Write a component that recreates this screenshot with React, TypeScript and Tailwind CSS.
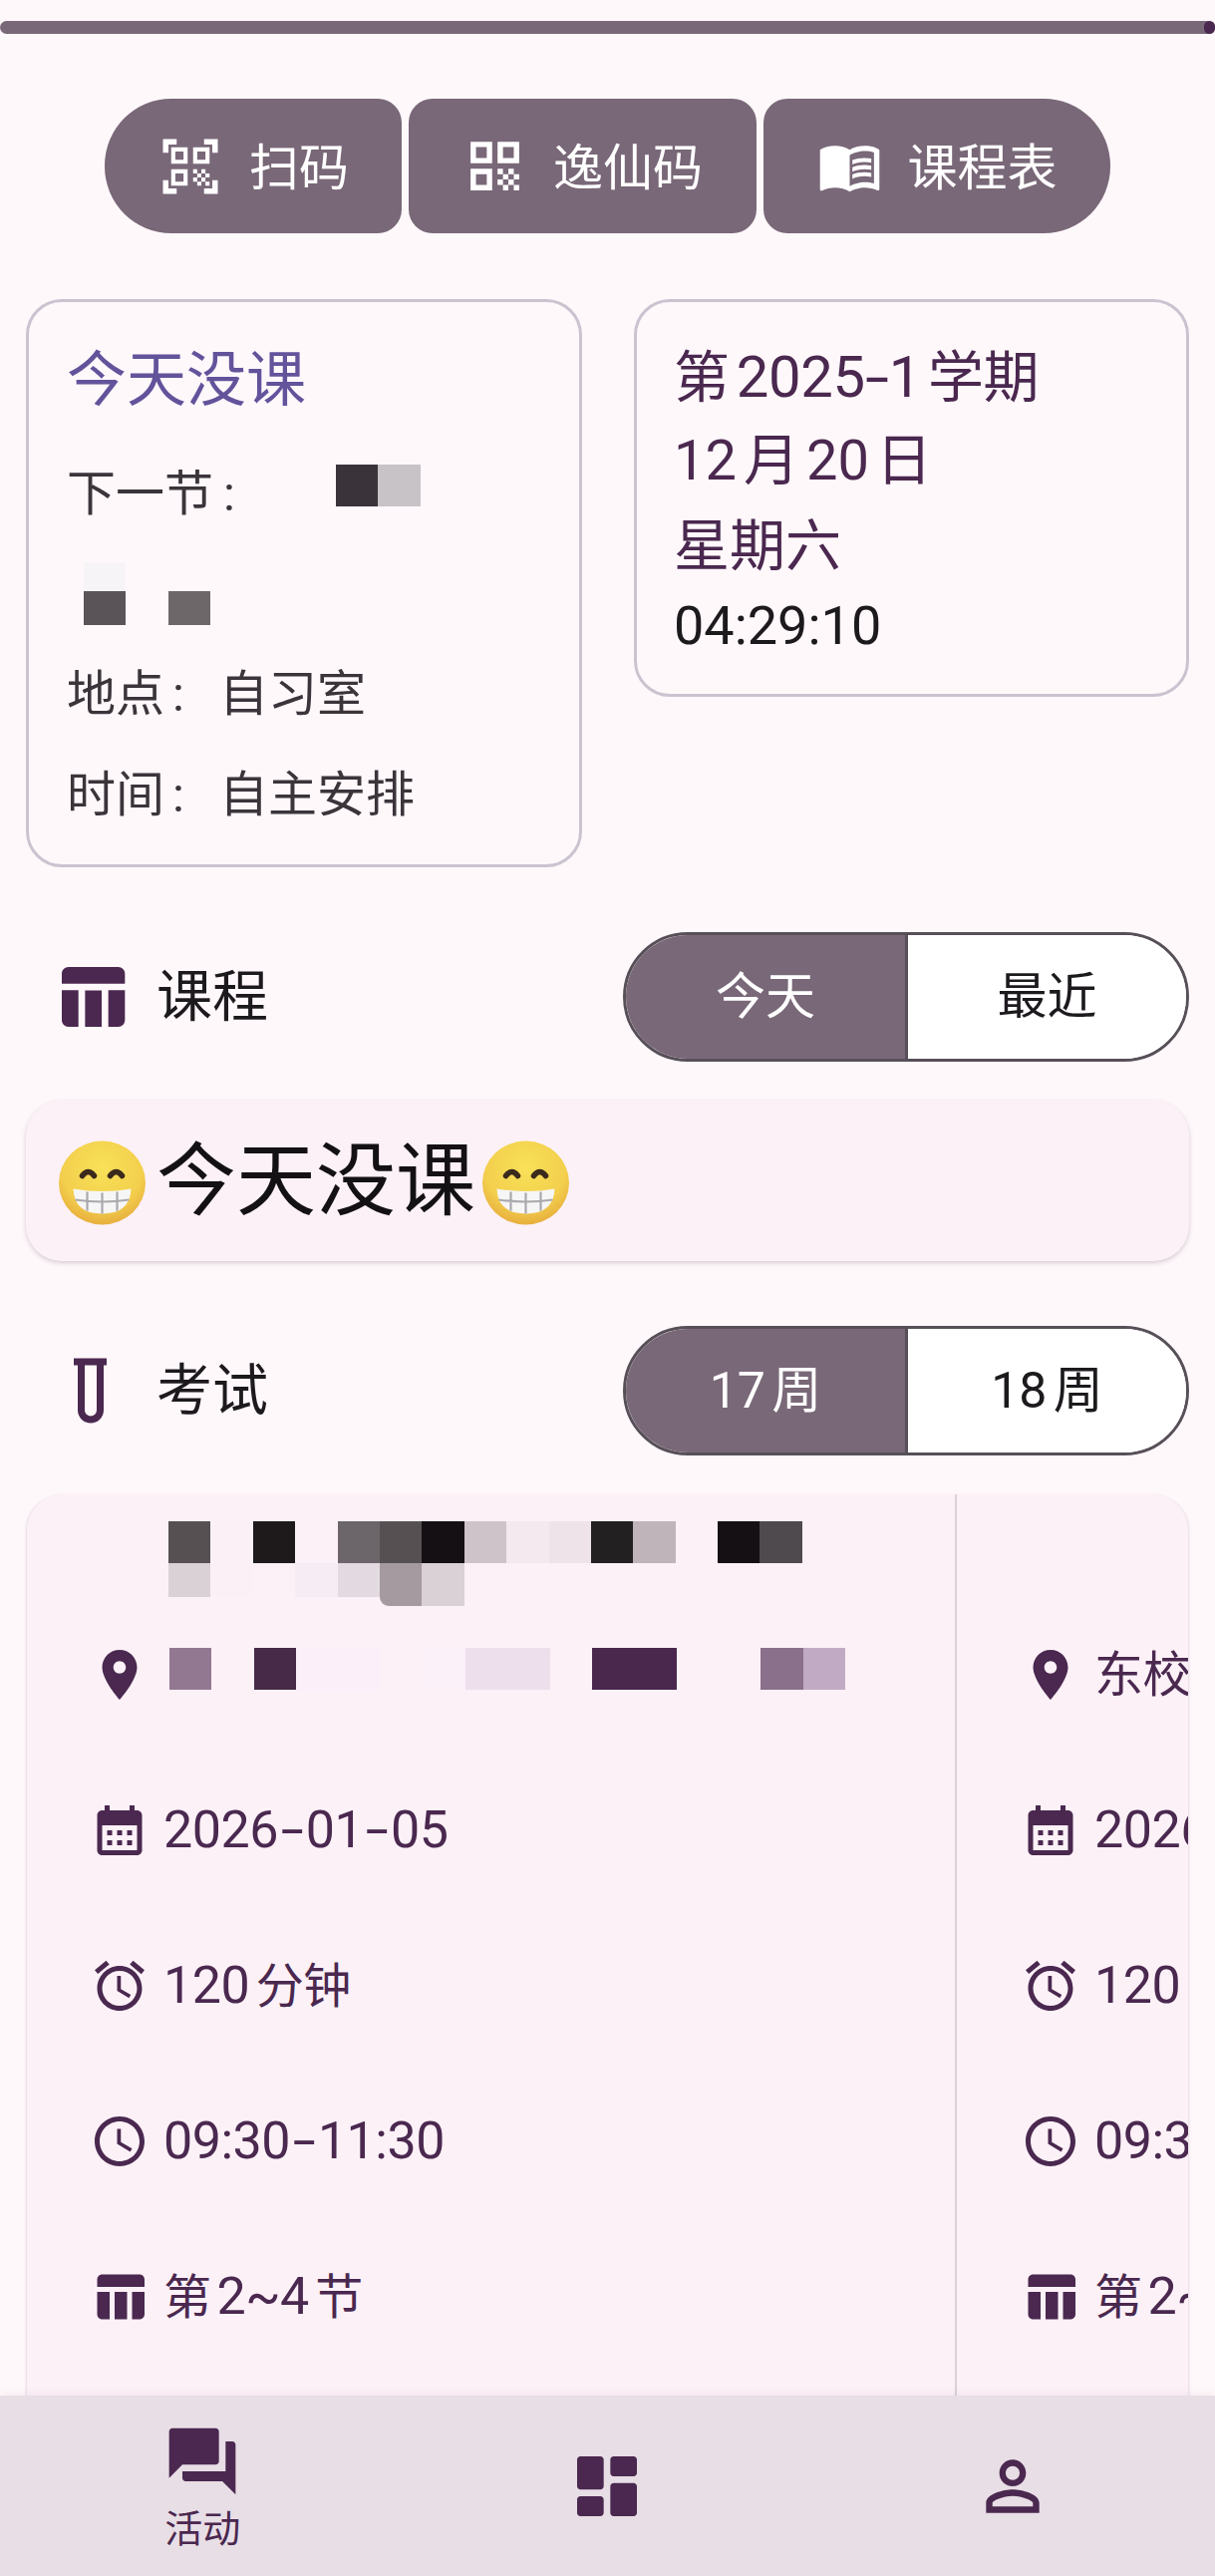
const qrScan =
  "M9.5 6.5v3h-3v-3h3M11 5H5v6h6V5zm-1.5 9.5v3h-3v-3h3M11 13H5v6h6v-6zm6.5-6.5v3h-3v-3h3M19 5h-6v6h6V5zm-6 8h1.5v1.5H13V13zm1.5 1.5H16V16h-1.5v-1.5zM16 13h1.5v1.5H16V13zm-3 3h1.5v1.5H13V16zm1.5 1.5H16V19h-1.5v-1.5zM16 16h1.5v1.5H16V16zm1.5-1.5H19V16h-1.5v-1.5zm0 3H19V19h-1.5v-1.5zM22 7h-2V4h-3V2h5v5zm0 15v-5h-2v3h-3v2h5zM2 22h5v-2H4v-3H2v5zM2 2v5h2V4h3V2H2z";
const qrCode =
  "M3 11h8V3H3v8zm2-6h4v4H5V5zM3 21h8v-8H3v8zm2-6h4v4H5v-4zm8-12v8h8V3h-8zm6 6h-4V5h4v4zm0 10h2v2h-2zm-6-6h2v2h-2zm2 2h2v2h-2zm-2 2h2v2h-2zm2 2h2v2h-2zm2-2h2v2h-2zm0-4h2v2h-2zm2 2h2v2h-2z";
const menuBook =
  "M21 5c-1.11-.35-2.33-.5-3.5-.5-1.95 0-4.05.4-5.5 1.5-1.45-1.1-3.55-1.5-5.5-1.5S2.45 4.9 1 6v14.65c0 .25.25.5.5.5.1 0 .15-.05.25-.05C3.1 20.45 5.05 20 6.5 20c1.95 0 4.05.4 5.5 1.5 1.35-.85 3.8-1.5 5.5-1.5 1.65 0 3.35.3 4.75 1.05.1.05.15.05.25.05.25 0 .5-.25.5-.5V6c-.6-.45-1.25-.75-2-1zm0 13.5c-1.1-.35-2.3-.5-3.5-.5-1.7 0-4.15.65-5.5 1.5V8c1.35-.85 3.8-1.5 5.5-1.5 1.2 0 2.4.15 3.5.5v11.5zM17.5 10.5c.88 0 1.73.09 2.5.26V9.24c-.79-.15-1.64-.24-2.5-.24-1.7 0-3.24.29-4.5.83v1.66c1.13-.64 2.7-.99 4.5-.99zM13 12.49v1.66c1.13-.64 2.7-.99 4.5-.99.88 0 1.73.09 2.5.26V11.9c-.79-.15-1.64-.24-2.5-.24-1.7 0-3.24.3-4.5.83zm4.5 1.84c-1.7 0-3.24.29-4.5.83v1.66c1.13-.64 2.7-.99 4.5-.99.88 0 1.73.09 2.5.26v-1.52c-.79-.16-1.64-.24-2.5-.24z";
const tableChart =
  "M10 10.02h5V21h-5zM17 21h3c1.1 0 2-.9 2-2v-9h-5v11zm3-18H5c-1.1 0-2 .9-2 2v3h19V5c0-1.1-.9-2-2-2zM3 19c0 1.1.9 2 2 2h3V10H3v9z";
const pin =
  "M12 2C8.13 2 5 5.13 5 9c0 5.25 7 13 7 13s7-7.75 7-13c0-3.87-3.13-7-7-7zm0 9.5c-1.38 0-2.5-1.12-2.5-2.5s1.12-2.5 2.5-2.5 2.5 1.12 2.5 2.5-1.12 2.5-2.5 2.5z";
const calendar =
  "M19 4h-1V2h-2v2H8V2H6v2H5c-1.11 0-1.99.9-1.99 2L3 20c0 1.1.89 2 2 2h14c1.1 0 2-.9 2-2V6c0-1.1-.9-2-2-2zm0 16H5V10h14v10zM9 14H7v-2h2v2zm4 0h-2v-2h2v2zm4 0h-2v-2h2v2zm-8 4H7v-2h2v2zm4 0h-2v-2h2v2zm4 0h-2v-2h2v2z";
const alarm =
  "M22 5.72l-4.6-3.86-1.29 1.53 4.6 3.86L22 5.72zM7.88 3.39L6.6 1.86 2 5.71l1.29 1.53 4.59-3.85zM12.5 8H11v6l4.75 2.85.75-1.23-4-2.37V8zM12 4c-4.97 0-9 4.03-9 9s4.03 9 9 9 9-4.03 9-9-4.03-9-9-9zm0 16c-3.87 0-7-3.13-7-7s3.13-7 7-7 7 3.13 7 7-3.13 7-7 7z";
const clock =
  "M11.99 2C6.47 2 2 6.48 2 12s4.47 10 9.99 10C17.52 22 22 17.52 22 12S17.52 2 11.99 2zM12 20c-4.42 0-8-3.58-8-8s3.58-8 8-8 8 3.58 8 8-3.58 8-8 8zm.5-13H11v6l5.25 3.15.75-1.23-4.5-2.67z";
const forum =
  "M21 6h-2v9H6v2c0 .55.45 1 1 1h11l4 4V7c0-.55-.45-1-1-1zm-4 6V3c0-.55-.45-1-1-1H3c-.55 0-1 .45-1 1v14l4-4h10c.55 0 1-.45 1-1z";
const dashboard =
  "M4 13h6c.55 0 1-.45 1-1V4c0-.55-.45-1-1-1H4c-.55 0-1 .45-1 1v8c0 .55.45 1 1 1zm0 8h6c.55 0 1-.45 1-1v-4c0-.55-.45-1-1-1H4c-.55 0-1 .45-1 1v4c0 .55.45 1 1 1zm10 0h6c.55 0 1-.45 1-1v-8c0-.55-.45-1-1-1h-6c-.55 0-1 .45-1 1v8c0 .55.45 1 1 1zM13 4v4c0 .55.45 1 1 1h6c.55 0 1-.45 1-1V4c0-.55-.45-1-1-1h-6c-.55 0-1 .45-1 1z";
const person =
  "M12 5.9c1.16 0 2.1.94 2.1 2.1s-.94 2.1-2.1 2.1S9.9 9.16 9.9 8s.94-2.1 2.1-2.1m0 9c2.97 0 6.1 1.46 6.1 2.1v1.1H5.9V17c0-.64 3.13-2.1 6.1-2.1M12 4C9.79 4 8 5.79 8 8s1.79 4 4 4 4-1.79 4-4-1.79-4-4-4zm0 9c-2.67 0-8 1.34-8 4v3h16v-3c0-2.66-5.33-4-8-4z";

const Icon = ({ d, className }: { d: string; className: string }) => (
  <svg viewBox="0 0 24 24" fill="currentColor" className={`shrink-0 ${className}`}>
    <path d={d} />
  </svg>
);

// blurred-out text in the screenshot, one class per mosaic cell
const Mosaic = ({ cells, className }: { cells: string[]; className: string }) => (
  <div className={`flex ${className}`}>
    {cells.map((c, i) => (
      <div key={i} className={`w-[42.4px] h-full ${c}`} />
    ))}
  </div>
);

const titleRow1 = [
  "bg-[#565053]", "bg-[#faf0f5]", "bg-[#1e1a1c]", "bg-transparent", "bg-[#6c666a]",
  "bg-[#565053]", "bg-[#141013]", "bg-[#cdc3c8]", "bg-[#f3e9ee]", "bg-[#ede3e9]",
  "bg-[#232022]", "bg-[#bfb4b9]", "bg-transparent", "bg-[#151014]", "bg-[#4f4a4d]",
];
const titleRow2 = [
  "bg-[#dad1d6]", "bg-[#faf0f5]", "bg-transparent", "bg-[#f5edf3]", "bg-[#e2dae0]",
  "bg-[#a49a9f]", "bg-[#d9d1d6]",
];
const titleRow3 = [
  "bg-transparent", "bg-transparent", "bg-transparent", "bg-transparent", "bg-transparent",
  "bg-[#a49a9f] rounded-bl-[12px]", "bg-[#d9d1d6]",
];
const placeRow = [
  "bg-[#937892]", "bg-transparent", "bg-[#462a48]", "bg-[#fbeff9]", "bg-[#fbeff9]",
  "bg-transparent", "bg-[#fbf1f8]", "bg-[#eddfec]", "bg-[#eddfec]", "bg-transparent",
  "bg-[#4a284d]", "bg-[#4a284d]", "bg-transparent", "bg-transparent", "bg-[#8a708a]",
  "bg-[#c1abc4]",
];

const Emoji = ({ id, className }: { id: string; className?: string }) => (
  <svg viewBox="-47.5 -47.5 95 95" className={`w-[95px] h-[95px] shrink-0 ${className ?? ""}`} role="img" aria-label="😁">
    <defs>
      <radialGradient id={id} cx="50%" cy="32%" r="72%">
        <stop offset="0%" stopColor="#f8e158" />
        <stop offset="65%" stopColor="#f3cf4d" />
        <stop offset="100%" stopColor="#e5a93a" />
      </radialGradient>
    </defs>
    <ellipse cx="0" cy="2" rx="43.5" ry="42" fill={`url(#${id})`} />
    <path d="M-20-5Q-14-13-8-5M8-5Q14-13 20-5" fill="none" stroke="#3b2a1c" strokeWidth="5.5" strokeLinecap="round" />
    <path d="M-29 8Q0 13 29 8Q28 33 0 33Q-28 33-29 8Z" fill="#f6f6f6" />
    <path d="M-27 19Q0 23 27 19M-15 11V30M0 12V33M15 11V30" fill="none" stroke="#a9a9ad" strokeWidth="2.2" />
  </svg>
);

const TubeIcon = () => (
  <svg viewBox="0 0 80 80" className="w-[80px] h-[80px] shrink-0 text-[#4a284f]">
    <path d="M22 7.5h33v7H22z" fill="currentColor" />
    <path d="M29.5 14V59.5a9.5 9.5 0 0 0 19 0V14" fill="none" stroke="currentColor" strokeWidth="7" />
  </svg>
);

const ActionButton = ({ d, label, className, iconClass }: { d: string; label: string; className: string; iconClass: string }) => (
  <div className={`h-[135px] bg-[#796878] text-white flex items-center justify-center gap-[26px] text-[50px] ${className}`}>
    <Icon d={d} className={iconClass} />
    <span className="translate-y-[3px]">{label}</span>
  </div>
);

const SectionHeader = ({ icon, title, left, right }: { icon: React.ReactNode; title: string; left: string; right: string }) => (
  <div className="flex items-center justify-between pl-[52px] pr-[26px]">
    <div className="flex items-center gap-[25px]">
      {icon}
      <span className="text-[56px] text-[#1d1a1e]">{title}</span>
    </div>
    <div className="flex w-[568px] h-[130px] rounded-full border-[3px] border-[#575058] overflow-hidden text-[50px]">
      <div className="w-[283px] bg-[#796878] text-white border-r-[3px] border-[#575058] flex items-center justify-center">{left}</div>
      <div className="flex-1 bg-white text-[#1d1a1e] flex items-center justify-center">{right}</div>
    </div>
  </div>
);

// the phone's hyphen is about twice as wide as Roboto's
const Dash = () => <span className="inline-block mx-[7px] scale-x-[1.6]">-</span>;
const Zh = ({ children }: { children: React.ReactNode }) => <span className="text-[48px]">{children}</span>;

const ExamRow = ({ d, children }: { d: string; children: React.ReactNode }) => (
  <div className="flex items-center gap-[14px] h-[60px] text-[52px] tracking-[-0.5px] text-[#4a284f] whitespace-nowrap">
    <Icon d={d} className="w-[60px] h-[60px]" />
    <div>{children}</div>
  </div>
);

const ExamDetails = ({ place }: { place: React.ReactNode }) => (
  <div className="flex flex-col gap-[96px]">
    <ExamRow d={pin}>{place}</ExamRow>
    <ExamRow d={calendar}>2026<Dash />01<Dash />05</ExamRow>
    <ExamRow d={alarm}>120<Zh>分钟</Zh></ExamRow>
    <ExamRow d={clock}>09:30<Dash />11:30</ExamRow>
    <ExamRow d={tableChart}><Zh>第</Zh>2~4<Zh>节</Zh></ExamRow>
  </div>
);

const Colon = () => <span className="ml-[8px] mr-[35px]">:</span>;

export default function App() {
  return (
    <div className="w-[1219px] h-[2584px] overflow-hidden flex flex-col bg-[#fff8fb] font-['Roboto','Noto_Sans_CJK_SC',sans-serif] [text-autospace:normal]">
      <div className="mt-[21px] h-[13px] shrink-0 rounded-full bg-[#796878] flex justify-end">
        <div className="w-[11px] h-full rounded-full bg-[#4a284f]" />
      </div>

      <div className="mt-[65px] flex justify-center gap-[7px] shrink-0">
        <ActionButton d={qrScan} label="扫码" iconClass="w-[66px] h-[66px]" className="w-[298px] rounded-l-[67px] rounded-r-[24px]" />
        <ActionButton d={qrCode} label="逸仙码" iconClass="w-[65px] h-[65px]" className="w-[349px] rounded-[24px]" />
        <ActionButton d={menuBook} label="课程表" iconClass="w-[65px] h-[65px]" className="w-[348px] rounded-r-[67px] rounded-l-[24px]" />
      </div>

      <div className="mt-[66px] px-[26px] flex items-start justify-between shrink-0">
        <div className="w-[558px] h-[570px] rounded-[36px] border-[3px] border-[#cac4d0] pl-[38px] pt-[45px] text-[49px] text-[#3b353b]">
          <div className="h-[68px] leading-[68px] text-[60px] text-[#62539b]">今天没课</div>
          <div className="mt-[35px] h-[84px] flex items-center">
            <span className="translate-y-[3px]">下一节</span>
            <span className="translate-y-[3px] ml-[10px] mr-[33px]">:</span>
            <Mosaic className="ml-[68px] h-[42px] -translate-y-[6px]" cells={["bg-[#3a343a]", "bg-[#c8c3c7]"]} />
          </div>
          <div className="mt-[29px] h-[63px] ml-[17px] flex flex-col">
            <Mosaic className="h-[29px]" cells={["bg-[#f7f4f7]"]} />
            <Mosaic className="h-[34px]" cells={["bg-[#5a5458]", "bg-transparent", "bg-[#6d6769]"]} />
          </div>
          <div className="mt-[28px] h-[84px] flex items-center">
            <span>地点</span>
            <Colon />
            <span>自习室</span>
          </div>
          <div className="mt-[17px] h-[84px] flex items-center">
            <span>时间</span>
            <Colon />
            <span>自主安排</span>
          </div>
        </div>

        <div className="w-[557px] h-[399px] rounded-[36px] border-[3px] border-[#cac4d0] pl-[37px] pt-[33px] text-[58px] text-[#4a284f]">
          <div className="h-[84px] leading-[84px] tracking-[-0.3px]">
            <span className="text-[56px]">第</span>2025
            <span className="inline-block mx-[4px] scale-x-[1.5]">-</span>1
            <span className="text-[56px]">学期</span>
          </div>
          <div className="h-[84px] leading-[84px] text-[56px]">12月20日</div>
          <div className="mt-[2px] h-[84px] leading-[84px] text-[56px]">星期六</div>
          <div className="-mt-[4px] h-[84px] leading-[84px] text-[54px] text-[#1d1a1e]">04:29:10</div>
        </div>
      </div>

      <div className="mt-[65px] shrink-0">
        <SectionHeader icon={<Icon d={tableChart} className="w-[80px] h-[80px] text-[#4a284f]" />} title="课程" left="今天" right="最近" />
      </div>

      <div className="mt-[39px] mx-[26px] h-[161px] shrink-0 rounded-[36px] bg-[#fcf1f7] shadow-[0_2px_5px_rgba(70,50,70,0.22)] flex items-center pl-[29px] text-[80px] text-[#141114]">
        <Emoji id="faceA" />
        <span className="ml-[7px]">今天没课</span>
        <Emoji id="faceB" className="ml-[3px]" />
      </div>

      <div className="mt-[65px] shrink-0">
        <SectionHeader icon={<TubeIcon />} title="考试" left="17周" right="18周" />
      </div>

      <div className="mt-[39px] mx-[26px] flex-1 min-h-0 rounded-t-[36px] bg-[#fcf1f7] border-x border-[#ece4ea] shadow-[0_1px_3px_rgba(70,50,70,0.12)] overflow-hidden flex">
        <div className="w-[933px] shrink-0 border-r-2 border-[#d8d0d6] pl-[63px]">
          <div className="pt-[27px] pl-[79px] h-[151px]">
            <Mosaic className="h-[42px]" cells={titleRow1} />
            <Mosaic className="h-[34px]" cells={titleRow2} />
            <Mosaic className="h-[9px]" cells={titleRow3} />
          </div>
          <ExamDetails place={<Mosaic className="h-[42px] ml-[6px] -translate-y-[6px]" cells={placeRow} />} />
        </div>
        <div className="flex-1 min-w-0 overflow-hidden pl-[64px] pt-[151px]">
          <ExamDetails place={<span className="text-[49px]">东校区</span>} />
        </div>
      </div>

      <div className="h-[181px] shrink-0 bg-[#e8dee6] text-[#4a284f] shadow-[0_-3px_8px_rgba(70,50,70,0.05)] relative flex">
        <div className="flex-1 flex flex-col items-center pt-[26px]">
          <Icon d={forum} className="w-[80px] h-[80px]" />
          <span className="text-[38px] leading-[44px] mt-[6px]">活动</span>
        </div>
        <div className="flex-1 flex justify-center pt-[51px]">
          <Icon d={dashboard} className="w-[80px] h-[80px]" />
        </div>
        <div className="flex-1 flex justify-center pt-[51px]">
          <Icon d={person} className="w-[80px] h-[80px]" />
        </div>
      </div>
    </div>
  );
}
